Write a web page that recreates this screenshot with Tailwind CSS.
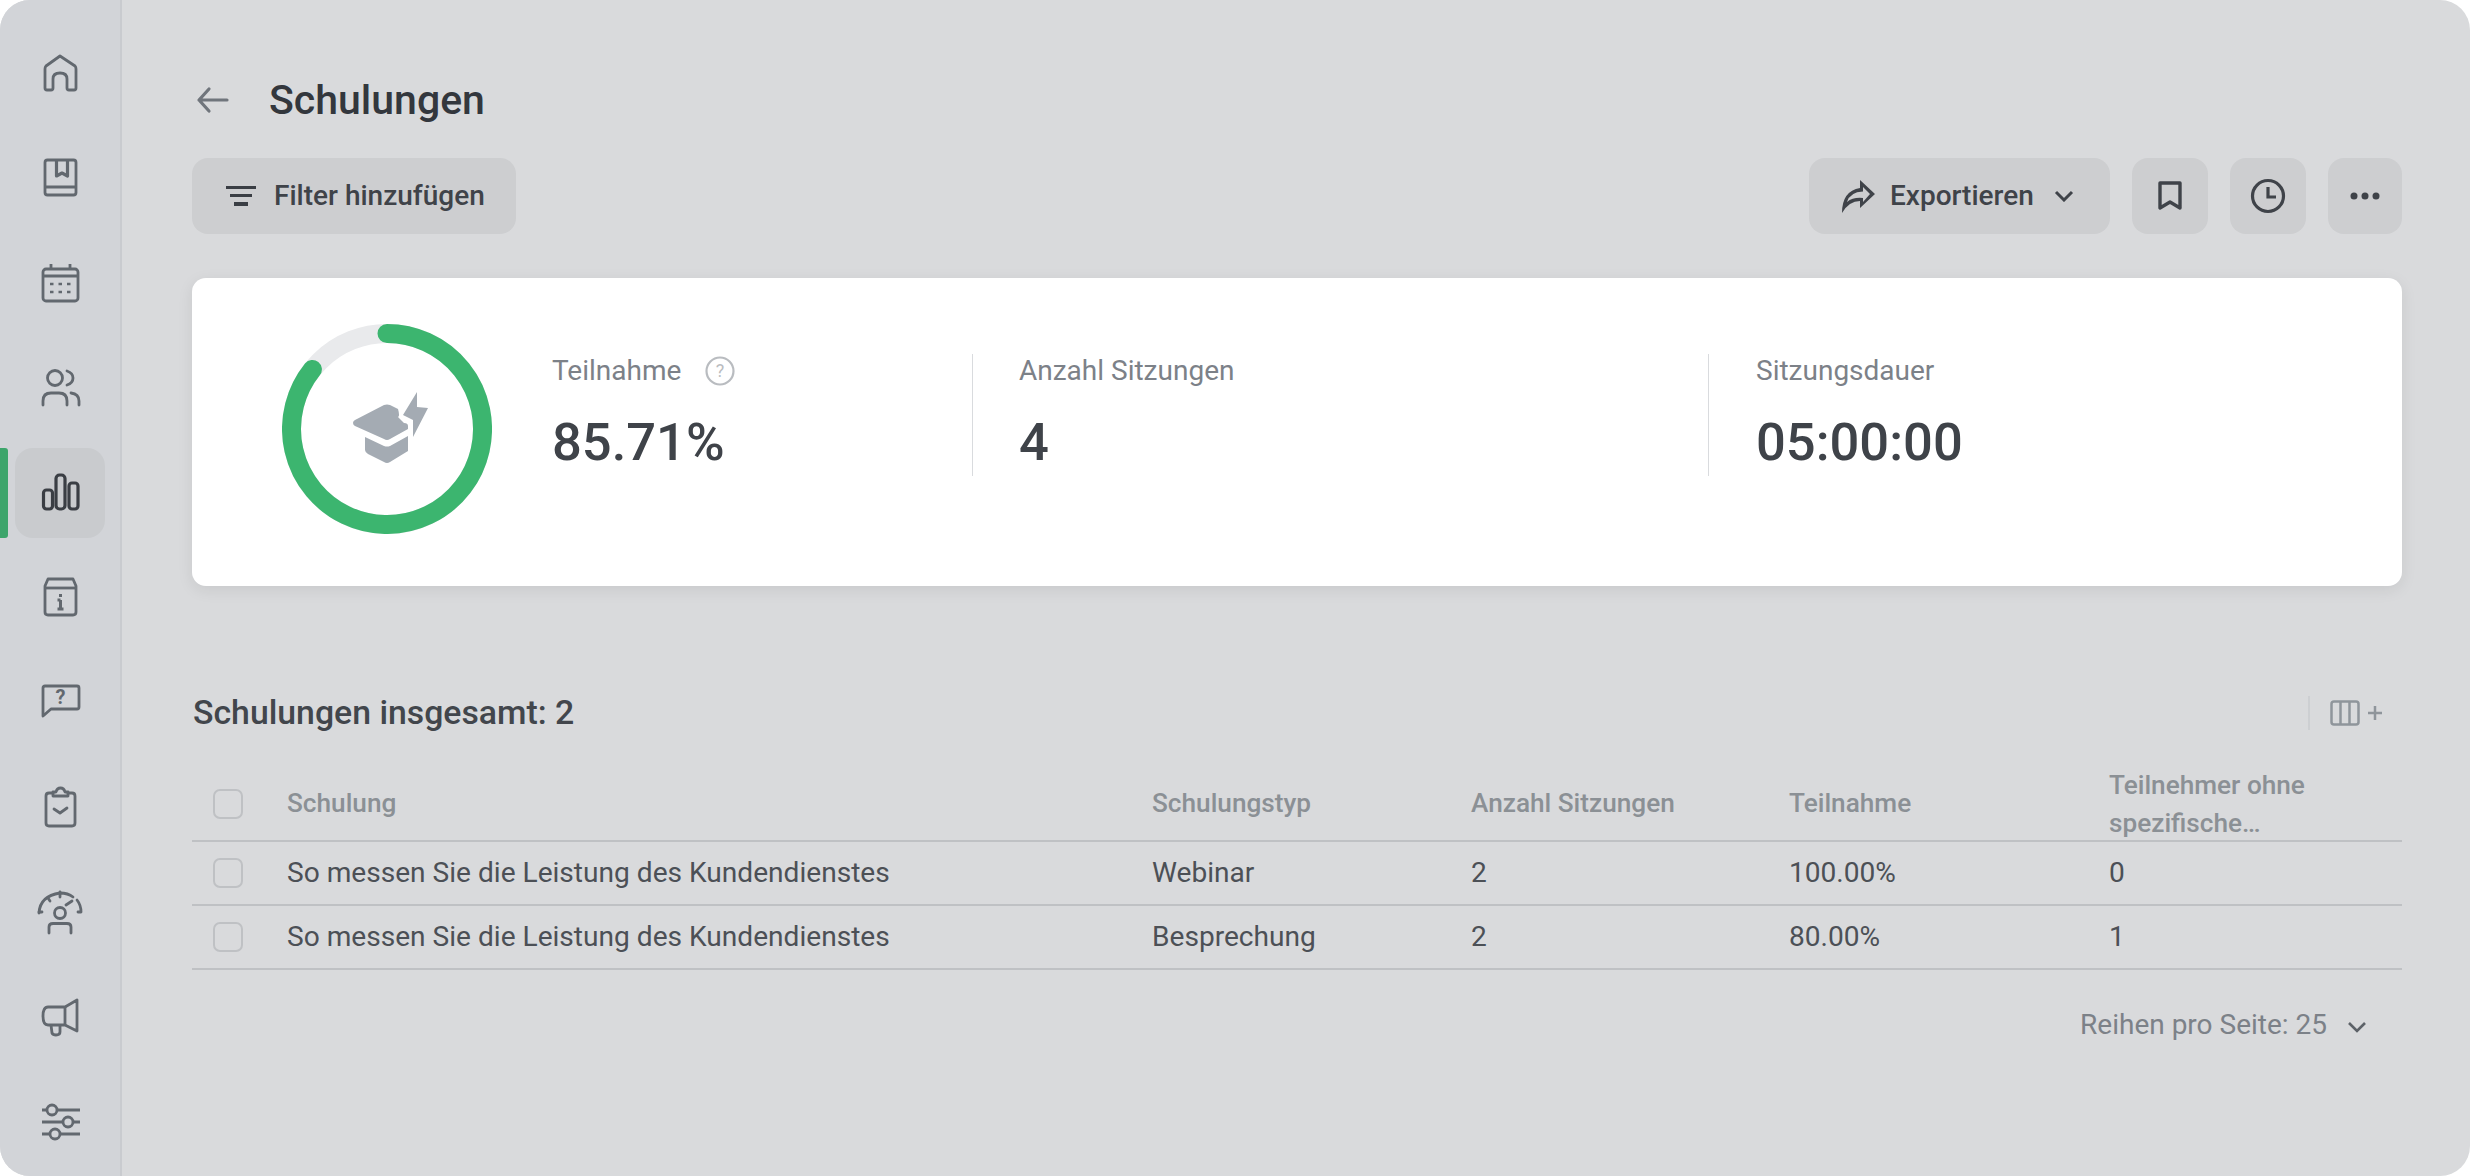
<!DOCTYPE html>
<html lang="de"><head><meta charset="utf-8"><title>Schulungen</title>
<script src="https://cdn.jsdelivr.net/npm/@tailwindcss/browser@4"></script></head>
<body class="bg-white">
<div class="w-[2470px] h-[1176px] flex overflow-hidden rounded-[30px] bg-[#d9dadc] font-['Roboto',sans-serif] text-[#3f4349]">
<aside class="relative w-[122px] shrink-0 h-full bg-[#d2d4d8] border-r-[2px] border-[#c9cbcf] flex flex-col items-center pt-[28px] gap-[14.9px] text-[#62686f]">
  <div class="absolute left-0 top-[448px] w-[8px] h-[90px] bg-[#3da56b] rounded-r-[3px]"></div>
  <div class="w-[90px] h-[90px] flex items-center justify-center"><svg width="48" height="48" viewBox="0 0 48 48" fill="none" stroke="currentColor" stroke-width="2.8" stroke-linejoin="round"><path d="M24 7L10 17Q9 18 9 20V39Q9 41 11 41H15Q17 41 17 39V30Q17 24 24 24Q31 24 31 30V39Q31 41 33 41H38Q40 41 40 39V20Q40 18 39 17Z"/></svg></div>
  <div class="w-[90px] h-[90px] flex items-center justify-center"><svg width="48" height="48" viewBox="0 0 48 48" fill="none" stroke="currentColor" stroke-width="2.8" stroke-linejoin="round"><rect x="9" y="6" width="31" height="35" rx="2.500"/><path d="M9 33H40"/><path d="M20.500 6V22L26 19L31.500 22V6" stroke-width="3.200"/></svg></div>
  <div class="w-[90px] h-[90px] flex items-center justify-center"><svg width="48" height="48" viewBox="0 0 48 48" fill="none" stroke="currentColor" stroke-width="2.8" stroke-linejoin="round"><rect x="7" y="10" width="35" height="32" rx="3"/><path d="M7 17H42M15 5V10M34 5V10"/><path d="M14 25h3.500M22.500 25h3.500M31 25h3.500M14 33h3.500M22.500 33h3.500M31 33h3.500" stroke-width="2.600"/></svg></div>
  <div class="w-[90px] h-[90px] flex items-center justify-center"><svg width="48" height="48" viewBox="0 0 48 48" fill="none" stroke="currentColor" stroke-width="2.8" stroke-linecap="round"><circle cx="19" cy="14" r="7.500"/><path d="M7 41V37Q7 29 15 29H23Q31 29 31 37V41"/><path d="M31 7Q37 9 37 14Q37 19 31 21M35 29Q43 30 43 37V41"/></svg></div>
  <div class="w-[90px] h-[90px] flex items-center justify-center rounded-[18px] bg-[#c9cbce]"><svg width="48" height="48" viewBox="0 0 48 48" fill="none" stroke="#3a3e44" stroke-width="3.200"><rect x="7.500" y="21" width="9" height="19" rx="3"/><rect x="20" y="6" width="9" height="34" rx="3.500"/><rect x="33" y="14" width="9" height="26" rx="3"/></svg></div>
  <div class="w-[90px] h-[90px] flex items-center justify-center"><svg width="48" height="48" viewBox="0 0 48 48" fill="none" stroke="currentColor" stroke-width="2.8" stroke-linejoin="round"><path d="M12 6H37L40 13V39Q40 42 37 42H12Q9 42 9 39V13Z"/><path d="M9 15H40"/><path d="M24.500 21V24M24.500 27V36M21.500 36H27.500M21.500 27H24.500" stroke-width="3"/></svg></div>
  <div class="w-[90px] h-[90px] flex items-center justify-center"><svg width="48" height="48" viewBox="0 0 48 48" fill="none" stroke="currentColor" stroke-width="2.8" stroke-linejoin="round"><path d="M7 10Q7 8 9 8H41Q43 8 43 10V29Q43 31 41 31H15L7 38Z"/><text x="24.500" y="26" text-anchor="middle" font-size="20" font-weight="700" fill="currentColor" stroke="none" font-family="Roboto">?</text></svg></div>
  <div class="w-[90px] h-[90px] flex items-center justify-center"><svg width="48" height="48" viewBox="0 0 48 48" fill="none" stroke="currentColor" stroke-width="2.8" stroke-linejoin="round" stroke-linecap="round"><path d="M17 10H13Q10 10 10 13V40Q10 43 13 43H36Q39 43 39 40V13Q39 10 36 10H32"/><path d="M17 13V9H20Q21 5 24.500 5Q28 5 29 9H32V13Z"/><path d="M18 26L24 30L31 25"/></svg></div>
  <div class="w-[90px] h-[90px] flex items-center justify-center"><svg width="48" height="48" viewBox="0 0 48 48" fill="none" stroke="currentColor" stroke-width="2.8" stroke-linecap="round"><path d="M3 25Q4 8 24 5Q32 5 37 9"/><path d="M41 12Q45 17 45 24M3 24H6M42 24H45M24 4V9M12 10L14 13M30 17L36 13"/><circle cx="24" cy="25" r="5.500"/><path d="M13 45V39Q13 35.500 17 35.500H31Q35 35.500 35 39V45"/></svg></div>
  <div class="w-[90px] h-[90px] flex items-center justify-center"><svg width="48" height="48" viewBox="0 0 48 48" fill="none" stroke="currentColor" stroke-width="2.8" stroke-linejoin="round"><path d="M29 14L41 7V38L29 32H12Q7 32 7 23Q7 14 12 14Z"/><path d="M29 14V32M15 32L16 40Q17 42 20 42Q24 42 24 39V32"/></svg></div>
  <div class="w-[90px] h-[90px] flex items-center justify-center"><svg width="48" height="48" viewBox="0 0 48 48" fill="none" stroke="currentColor" stroke-width="2.8"><path d="M6 12H11M21 12H44M6 24H27M37 24H44M6 36H14M24 36H44"/><circle cx="16" cy="12" r="5"/><circle cx="32" cy="24" r="5"/><circle cx="19" cy="36" r="5"/></svg></div>
</aside>
<main class="flex-1 pl-[70px] pr-[68px] pt-[68px] min-w-0">
  <div class="flex items-center h-[64px]">
    <svg class="ml-[2px]" width="36" height="36" viewBox="0 0 36 36" fill="none" stroke="#70757c" stroke-width="3.200" stroke-linecap="round" stroke-linejoin="round"><path d="M5 18H33M15 7L5 18L15 29"/></svg>
    <h1 class="ml-[39px] text-[41px] leading-[64px] font-medium text-[#33373d]">Schulungen</h1>
  </div>
  <div class="flex items-center mt-[26px] h-[76px]">
    <button class="h-[76px] w-[324px] rounded-[16px] bg-[#cdced0] flex items-center pl-[34px] gap-[18px] text-[28px] font-medium text-[#3f4349]"><svg width="30" height="22" viewBox="0 0 30 22" fill="#3a3e44"><rect y="1" width="30" height="3"/><rect x="4" y="9" width="22" height="3"/><rect x="8" y="17" width="14" height="4"/></svg><span>Filter hinzufügen</span></button>
    <div class="ml-auto flex items-center gap-[22px]">
      <button class="h-[76px] w-[301px] rounded-[16px] bg-[#cdced0] flex items-center pl-[32px] gap-[15px] text-[28px] font-medium text-[#3f4349]"><svg width="34" height="36" viewBox="0 0 34 36" fill="#3f4349"><path d="M19 2L34 16L19 30V23Q8 23 1 35Q1 13 19 10Z"/><path d="M22 9V13.500Q9 14 6 24Q12 19 22 20V24L29 16Z" fill="#cdced0"/></svg><span>Exportieren</span><svg class="ml-[5px]" width="20" height="12" viewBox="0 0 20 12" fill="none" stroke="#3f4349" stroke-width="3"><path d="M2 2L10 10L18 2"/></svg></button>
      <button class="h-[76px] w-[76px] rounded-[16px] bg-[#cdced0] flex items-center justify-center"><svg width="24" height="30" viewBox="0 0 24 30" fill="none" stroke="#3f4349" stroke-width="3.400" stroke-linejoin="round"><path d="M2 2H22V27L12 21L2 27Z"/></svg></button>
      <button class="h-[76px] w-[76px] rounded-[16px] bg-[#cdced0] flex items-center justify-center"><svg width="36" height="36" viewBox="0 0 36 36" fill="none" stroke="#3f4349" stroke-width="3.200"><circle cx="18" cy="18" r="15.500"/><path d="M18 9V19H26"/></svg></button>
      <button class="h-[76px] w-[74px] rounded-[16px] bg-[#cdced0] flex items-center justify-center"><svg width="30" height="8" viewBox="0 0 30 8" fill="#3f4349"><circle cx="4" cy="4" r="3.500"/><circle cx="15" cy="4" r="3.500"/><circle cx="26" cy="4" r="3.500"/></svg></button>
    </div>
  </div>
  <section class="mt-[44px] h-[308px] rounded-[14px] bg-white shadow-[0_4px_16px_rgba(0,0,0,0.08)] flex items-start pl-[90px] pt-[46px]">
    <svg class="shrink-0" width="210" height="210" viewBox="0 0 210 210" fill="none"><circle cx="105" cy="105" r="95.500" stroke="#e9eaec" stroke-width="19"/><path d="M105 9.500A95.500 95.500 0 1 1 30.400 45.400" stroke="#3cb56f" stroke-width="19" stroke-linecap="round"/><g fill="#a4abb3"><path d="M71 99Q71 97 73 96L102 81Q105 80 108 81L116 85Q118 92 116 93L122 99Q126 99 126 102V105L108 115Q105 117 102 115L73 102Q71 101 71 99Z"/><path d="M83 113L102 122Q105 123 108 122L126 112V127L108 138Q105 140 102 138L86 130Q83 128 83 126Z"/><path d="M135 68L121 91L131 96L131 113L146 84L135 83Z"/></g></svg>
    <div class="ml-[60px] w-[420px] shrink-0 pt-[27px]">
      <div class="flex items-center h-[40px] text-[28px] text-[#7c8188]">Teilnahme<svg class="ml-[24px]" width="30" height="30" viewBox="0 0 30 30" fill="none" stroke="#b9bcc0" stroke-width="2.200"><circle cx="15" cy="15" r="13.500"/><text x="15" y="21" text-anchor="middle" font-size="18" fill="#b9bcc0" stroke="none" font-family="Roboto">?</text></svg></div>
      <div class="mt-[19px] text-[52.5px] leading-[64px] font-medium">85.71%</div>
    </div>
    <div class="w-[736px] shrink-0 h-[122px] mt-[30px] border-l-[1px] border-[#d9dbde] pl-[46px]">
      <div class="h-[40px] -mt-[3px] text-[28px] leading-[40px] text-[#7c8188]">Anzahl Sitzungen</div>
      <div class="mt-[19px] text-[52.5px] leading-[64px] font-medium">4</div>
    </div>
    <div class="shrink-0 h-[122px] mt-[30px] border-l-[1px] border-[#d9dbde] pl-[47px]">
      <div class="h-[40px] -mt-[3px] text-[28px] leading-[40px] text-[#7c8188]">Sitzungsdauer</div>
      <div class="mt-[19px] text-[52.5px] leading-[64px] font-medium">05:00:00</div>
    </div>
  </section>
  <div class="mt-[103px] flex items-center h-[48px]">
    <h2 class="ml-[1px] text-[33.8px] font-medium text-[#42464c]">Schulungen insgesamt: 2</h2>
    <div class="ml-auto flex items-center pr-[20px]"><div class="w-[2px] h-[34px] bg-[#cdcfd2]"></div><svg class="ml-[20px]" width="30" height="26" viewBox="0 0 30 26" fill="none" stroke="#8f959b" stroke-width="2.500"><rect x="1.500" y="1.500" width="27" height="23" rx="2.500"/><path d="M10.500 1.500V24.500M19.500 1.500V24.500"/></svg><svg class="ml-[8px]" width="14" height="14" viewBox="0 0 14 14" stroke="#8f959b" stroke-width="2.500"><path d="M0 7H14M7 0V14"/></svg></div>
  </div>
  <div class="mt-[15px]">
    <div class="grid grid-cols-[95px_865px_319px_318px_320px_293px] h-[90px] items-center border-b-2 border-[#bfc1c4] text-[26.2px] font-medium text-[#8b9095]">
      <div class="pl-[21px]"><div class="w-[30px] h-[30px] rounded-[7px] border-2 border-[#bfc1c4] relative top-[8px]"></div></div>
      <div class="relative top-[8px]">Schulung</div><div class="relative top-[8px]">Schulungstyp</div><div class="relative top-[8px]">Anzahl Sitzungen</div><div class="relative top-[8px]">Teilnahme</div>
      <div class="leading-[38px] relative top-[8px] whitespace-nowrap">Teilnehmer ohne<br>spezifische…</div>
    </div>
    <div class="grid grid-cols-[95px_865px_319px_318px_320px_293px] h-[64px] items-center border-b-2 border-[#bfc1c4] text-[28.1px] text-[#4c5056]">
      <div class="pl-[21px]"><div class="w-[30px] h-[30px] rounded-[7px] border-2 border-[#bfc1c4]"></div></div>
      <div>So messen Sie die Leistung des Kundendienstes</div><div>Webinar</div><div>2</div><div>100.00%</div><div>0</div>
    </div>
    <div class="grid grid-cols-[95px_865px_319px_318px_320px_293px] h-[64px] items-center border-b-2 border-[#bfc1c4] text-[28.1px] text-[#4c5056]">
      <div class="pl-[21px]"><div class="w-[30px] h-[30px] rounded-[7px] border-2 border-[#bfc1c4]"></div></div>
      <div>So messen Sie die Leistung des Kundendienstes</div><div>Besprechung</div><div>2</div><div>80.00%</div><div>1</div>
    </div>
  </div>
  <div class="mt-[33px] flex items-center justify-end pr-[36px] h-[44px] text-[28px] text-[#7c8188]"><span>Reihen pro Seite: 25</span><svg class="ml-[21px] mt-[4px]" width="18" height="12" viewBox="0 0 18 12" fill="none" stroke="#5d6268" stroke-width="2.600"><path d="M1 2L9 10L17 2"/></svg></div>
</main>
</div>
</body></html>
